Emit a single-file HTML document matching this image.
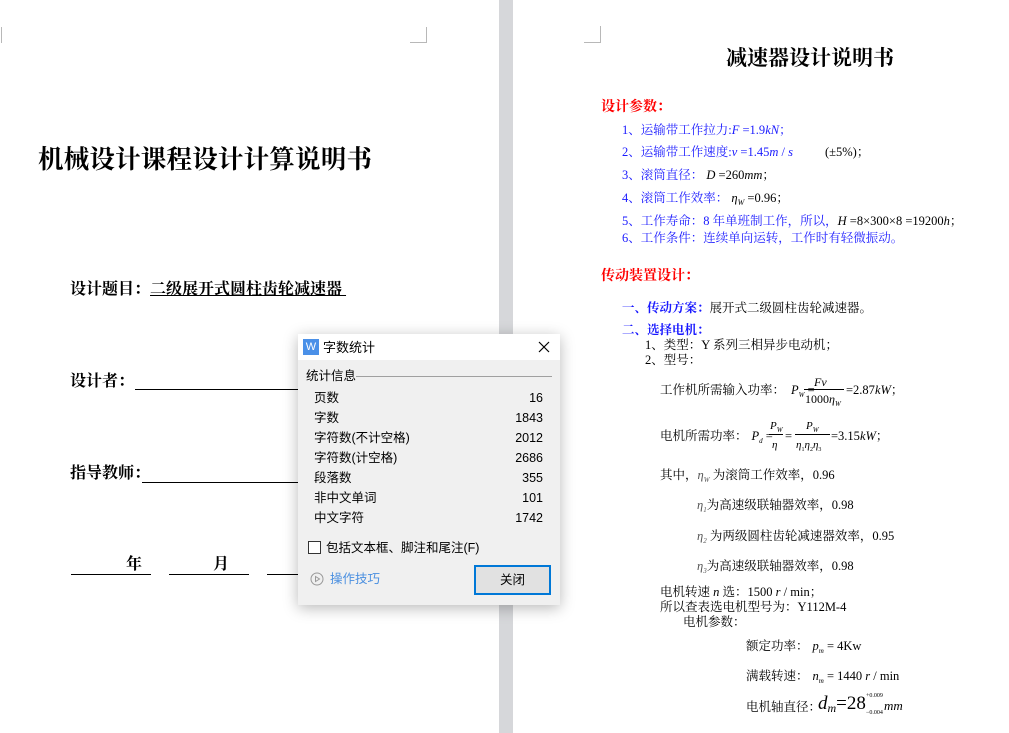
<!DOCTYPE html>
<html><head><meta charset="utf-8"><style>
*{margin:0;padding:0;box-sizing:border-box}
body{width:1009px;height:733px;overflow:hidden;background:#fff;position:relative;font-family:"Liberation Serif","Noto Serif CJK SC",serif;color:#000}
.a{position:absolute;white-space:nowrap;line-height:1}
.gap{position:absolute;left:499px;top:0;width:14px;height:733px;background:#d6d7da}
.cm{position:absolute;border-color:#b8b8b8;border-style:solid;border-width:0}
.s{font-family:"Liberation Serif","Noto Serif CJK SC",serif}
.b{color:#1a1aff;font-size:12.5px;margin-top:3px}
.r{color:#f00;font-weight:bold;font-size:14px;margin-top:3px}
.k{font-size:12.5px;margin-top:3px}
i{font-family:"Liberation Serif",serif}
sub{line-height:0;vertical-align:-3px}
.ul{position:absolute;height:1px;background:#000}
.dlg{position:absolute;left:298px;top:334px;width:262px;height:271px;background:#f0f0f0;box-shadow:0 3px 14px rgba(0,0,0,.28);font-family:"Liberation Sans","Noto Sans CJK SC",sans-serif;font-size:12.5px;color:#000}
.dlg .a{line-height:1}
</style></head><body>
<div class="gap"></div>
<div class="cm" style="left:410px;top:27px;width:17px;height:16px;border-right-width:1px;border-bottom-width:1px"></div>
<div class="cm" style="left:0;top:27px;width:2px;height:16px;border-right-width:1px"></div>
<div class="cm" style="left:584px;top:26px;width:17px;height:17px;border-right-width:1px;border-bottom-width:1px"></div>

<div class="a s" style="left:38px;top:147px;font-size:25.5px;font-weight:bold;letter-spacing:0.2px">机械设计课程设计计算说明书</div>
<div class="a s" style="left:70px;top:282px;font-size:16px;font-weight:bold">设计题目：<span style="text-decoration:underline">二级展开式圆柱齿轮减速器&nbsp;</span></div>
<div class="a s" style="left:70px;top:374px;font-size:16px;font-weight:bold">设计者：</div>
<div class="ul" style="left:135px;top:389px;width:170px"></div>
<div class="a s" style="left:70px;top:466px;font-size:16px;font-weight:bold">指导教师：</div>
<div class="ul" style="left:142px;top:482px;width:163px"></div>
<div class="a s" style="left:126px;top:557px;font-size:16px;font-weight:bold">年</div>
<div class="a s" style="left:213px;top:557px;font-size:16px;font-weight:bold">月</div>
<div class="ul" style="left:71px;top:574px;width:80px"></div>
<div class="ul" style="left:169px;top:574px;width:80px"></div>
<div class="ul" style="left:267px;top:574px;width:40px"></div>

<div class="a s" style="left:726px;top:48px;font-size:21px;font-weight:bold">减速器设计说明书</div>
<div class="a r" style="left:601px;top:98px">设计参数：</div>
<div class="a b" style="left:622px;top:121px">1、运输带工作拉力:<i>F</i> =1.9<i>kN</i>；</div>
<div class="a b" style="left:622px;top:143px">2、运输带工作速度:<i>v</i> =1.45<i>m</i> / <i>s</i><span style="color:#000;margin-left:32px">(±5%)；</span></div>
<div class="a b" style="left:622px;top:166px">3、滚筒直径：<span style="color:#000"> <i>D</i> =260<i>mm</i>；</span></div>
<div class="a b" style="left:622px;top:189px">4、滚筒工作效率：<span style="color:#000"> <i>η<sub style="font-size:8px">W</sub></i> =0.96；</span></div>
<div class="a b" style="left:622px;top:212px">5、工作寿命：8 年单班制工作，所以，<span style="color:#000"><i>H</i> =8×300×8 =19200<i>h</i>；</span></div>
<div class="a b" style="left:622px;top:229px">6、工作条件：连续单向运转，工作时有轻微振动。</div>

<div class="a r" style="left:601px;top:267px">传动装置设计：</div>
<div class="a k" style="left:622px;top:299px"><b style="color:#1a1aff">一、传动方案：</b>展开式二级圆柱齿轮减速器。</div>
<div class="a k" style="left:622px;top:321px"><b style="color:#1a1aff">二、选择电机：</b></div>
<div class="a k" style="left:645px;top:336px">1、类型：Y 系列三相异步电动机；</div>
<div class="a k" style="left:645px;top:351px">2、型号：</div>
<div class="a k" style="left:660px;top:381px">工作机所需输入功率：<i style="margin-left:6px">P<sub style="font-size:7px">W</sub></i> =</div>
<div class="a k" style="left:814px;top:373px;font-size:12px"><i>Fv</i></div>
<div class="ul" style="left:804px;top:389px;width:40px"></div>
<div class="a k" style="left:805px;top:390px;font-size:12px">1000<i>η<sub style="font-size:7px">W</sub></i></div>
<div class="a k" style="left:846px;top:381px">=2.87<i>kW</i>；</div>
<div class="a k" style="left:660px;top:427px">电机所需功率：<i style="margin-left:4px">P<sub style="font-size:7px">d</sub></i> =</div>
<div class="a k" style="left:770px;top:418px;font-size:11px"><i>P<sub style="font-size:7px">W</sub></i></div>
<div class="ul" style="left:769px;top:434px;width:14px"></div>
<div class="a k" style="left:772px;top:437px;font-size:11px"><i>η</i></div>
<div class="a k" style="left:785px;top:427px">=</div>
<div class="a k" style="left:806px;top:418px;font-size:11px"><i>P<sub style="font-size:7px">W</sub></i></div>
<div class="ul" style="left:795px;top:434px;width:35px"></div>
<div class="a k" style="left:796px;top:437px;font-size:11px"><i>η</i><sub style="font-size:6px">1</sub><i>η</i><sub style="font-size:6px">2</sub><i>η</i><sub style="font-size:6px">3</sub></div>
<div class="a k" style="left:831px;top:427px">=3.15<i>kW</i>；</div>
<div class="a k" style="left:660px;top:466px">其中，<i style="color:#555">η<sub style="font-size:7px">W</sub></i> 为滚筒工作效率，0.96</div>
<div class="a k" style="left:697px;top:496px"><i style="color:#555">η<sub style="font-size:7px">1</sub></i>为高速级联轴器效率，0.98</div>
<div class="a k" style="left:697px;top:527px"><i style="color:#555">η<sub style="font-size:7px">2</sub></i> 为两级圆柱齿轮减速器效率，0.95</div>
<div class="a k" style="left:697px;top:557px"><i style="color:#555">η<sub style="font-size:7px">3</sub></i>为高速级联轴器效率，0.98</div>
<div class="a k" style="left:660px;top:583px">电机转速 <i>n</i> 选：1500 <i>r</i> / min；</div>
<div class="a k" style="left:660px;top:598px">所以查表选电机型号为：Y112M-4</div>
<div class="a k" style="left:683px;top:613px">电机参数：</div>
<div class="a k" style="left:746px;top:637px">额定功率：<i style="margin-left:4px">p<sub style="font-size:7px">m</sub></i> = 4Kw</div>
<div class="a k" style="left:746px;top:667px">满载转速：<i style="margin-left:4px">n<sub style="font-size:7px">m</sub></i> = 1440 <i>r</i> / min</div>
<div class="a k" style="left:746px;top:698px">电机轴直径：</div>
<div class="a" style="left:818px;top:694px;font-size:19px"><i>d<sub style="font-size:12px">m</sub></i>=28</div>
<div class="a" style="left:866px;top:693px;font-size:6px">+0.009</div>
<div class="a" style="left:866px;top:710px;font-size:6px">−0.004</div>
<div class="a" style="left:884px;top:699px;font-size:13px"><i>mm</i></div>

<div class="dlg">
 <div style="position:absolute;left:0;top:0;width:262px;height:26px;background:#fff"></div>
 <div style="position:absolute;left:5px;top:5px;width:16px;height:16px;background:#4a90e8;color:#fff;font-size:11px;text-align:center;line-height:16px">W</div>
 <div class="a" style="left:25px;top:7px;font-size:13px">字数统计</div>
 <svg style="position:absolute;left:240px;top:7px" width="12" height="12"><path d="M1 1L11 11M11 1L1 11" stroke="#000" stroke-width="1.2"/></svg>
 <div class="a" style="left:8px;top:36px">统计信息</div>
 <div style="position:absolute;left:58px;top:42px;width:196px;height:1px;background:#a0a0a0"></div>
 <div class="a" style="left:16px;top:58px">页数</div><div class="a" style="right:17px;top:58px">16</div>
 <div class="a" style="left:16px;top:78px">字数</div><div class="a" style="right:17px;top:78px">1843</div>
 <div class="a" style="left:16px;top:98px">字符数(不计空格)</div><div class="a" style="right:17px;top:98px">2012</div>
 <div class="a" style="left:16px;top:118px">字符数(计空格)</div><div class="a" style="right:17px;top:118px">2686</div>
 <div class="a" style="left:16px;top:138px">段落数</div><div class="a" style="right:17px;top:138px">355</div>
 <div class="a" style="left:16px;top:158px">非中文单词</div><div class="a" style="right:17px;top:158px">101</div>
 <div class="a" style="left:16px;top:178px">中文字符</div><div class="a" style="right:17px;top:178px">1742</div>
 <div style="position:absolute;left:10px;top:207px;width:13px;height:13px;border:1px solid #333;background:#fff"></div>
 <div class="a" style="left:28px;top:208px">包括文本框、脚注和尾注(F)</div>
 <svg style="position:absolute;left:12px;top:238px" width="14" height="14"><circle cx="7" cy="7" r="6" fill="none" stroke="#999"/><path d="M5.5 4.5L9.5 7L5.5 9.5Z" fill="none" stroke="#999"/></svg>
 <div class="a" style="left:32px;top:239px;color:#4a8fe0">操作技巧</div>
 <div style="position:absolute;left:176px;top:231px;width:77px;height:30px;border:2px solid #0078d7;background:#e1e1e1;text-align:center;line-height:26px">关闭</div>
</div>
</body></html>
